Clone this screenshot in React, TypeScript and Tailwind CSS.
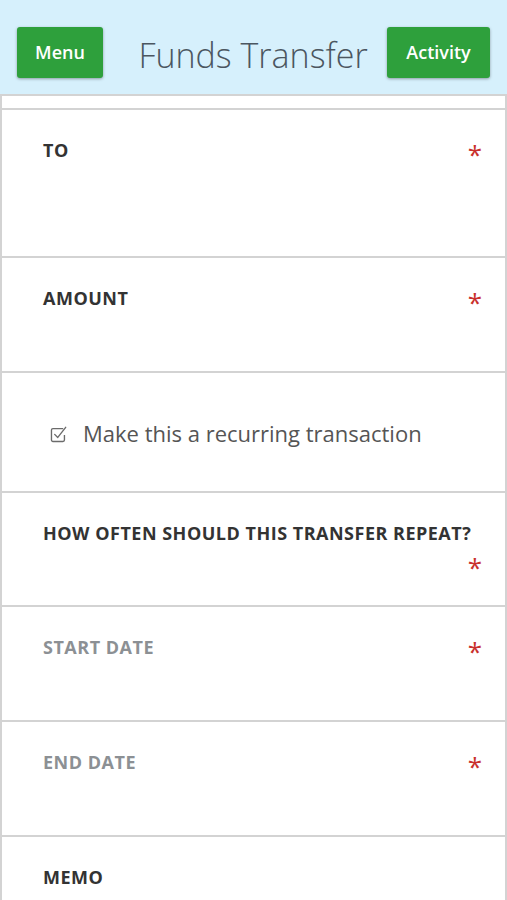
import React from "react";

const font = { fontFamily: '"Open Sans", "Noto Sans", sans-serif' };

function Asterisk() {
  return (
    <span className="ml-auto pl-[20px] pr-[23px] text-[26px] leading-[24px] font-normal text-[#c9302c] translate-y-[4px]">*</span>
  );
}

function Field({ label, muted, height }: { label: string; muted?: boolean; height: string }) {
  return (
    <div className={`border-t-2 border-[#d3d3d3] bg-white pl-[41px] pt-[28px] ${height}`}>
      <div className="flex flex-wrap items-start gap-y-[6px]">
        <span
          className={`text-[18px] leading-[24px] font-bold tracking-[0.5px] ${
            muted ? "text-[#8c9094]" : "text-[#333333]"
          }`}
        >
          {label}
        </span>
        <Asterisk />
      </div>
    </div>
  );
}

function CheckIcon() {
  return (
    <svg width="21" height="21" viewBox="0 0 17 17" fill="none" stroke="#6b6b6b" strokeWidth="1.1">
      <path d="M11.5 4.5H3.2a1.2 1.2 0 0 0-1.2 1.2v8.1a1.2 1.2 0 0 0 1.2 1.2h8.1a1.2 1.2 0 0 0 1.2-1.2v-4" />
      <path d="M4.6 9.2l2.5 2.5 6.4-8.2" strokeLinecap="round" strokeLinejoin="round" />
    </svg>
  );
}

export default function App() {
  return (
    <div className="min-h-[900px] bg-white" style={font}>
      <header className="flex h-[94px] items-start justify-between bg-[#d6f0fc] px-[17px] pt-[27px]">
        <button className="h-[51px] w-[86px] rounded-[3px] bg-[#2ea03c] text-[18px] font-semibold text-white shadow-[0_1px_3px_rgba(0,0,0,0.35)]">
          Menu
        </button>
        <h1 className="pl-4 pt-[6px] text-[34px] leading-[44px] font-light text-[#4b5660]">Funds Transfer</h1>
        <button className="h-[51px] w-[103px] rounded-[3px] bg-[#2ea03c] text-[18px] font-semibold text-white shadow-[0_1px_3px_rgba(0,0,0,0.35)]">
          Activity
        </button>
      </header>
      <div className="border-x-2 border-[#d3d3d3]">
        <div className="h-[14px] border-t-2 border-[#d3d3d3] bg-white" />
        <Field label="TO" height="h-[148px]" />
        <Field label="AMOUNT" height="h-[115px]" />
        <div className="flex h-[120px] items-center border-t-2 border-[#d3d3d3] pl-[47px] pt-[2px]">
          <CheckIcon />
          <span className="ml-[13px] text-[22px] text-[#555555]">Make this a recurring transaction</span>
        </div>
        <Field label="HOW OFTEN SHOULD THIS TRANSFER REPEAT?" height="h-[114px]" />
        <Field label="START DATE" muted height="h-[115px]" />
        <Field label="END DATE" muted height="h-[115px]" />
        <div className="h-[80px] border-t-2 border-[#d3d3d3] bg-white pl-[41px] pt-[28px]">
          <span className="text-[18px] leading-[24px] font-bold tracking-[0.5px] text-[#333333]">MEMO</span>
        </div>
      </div>
    </div>
  );
}
